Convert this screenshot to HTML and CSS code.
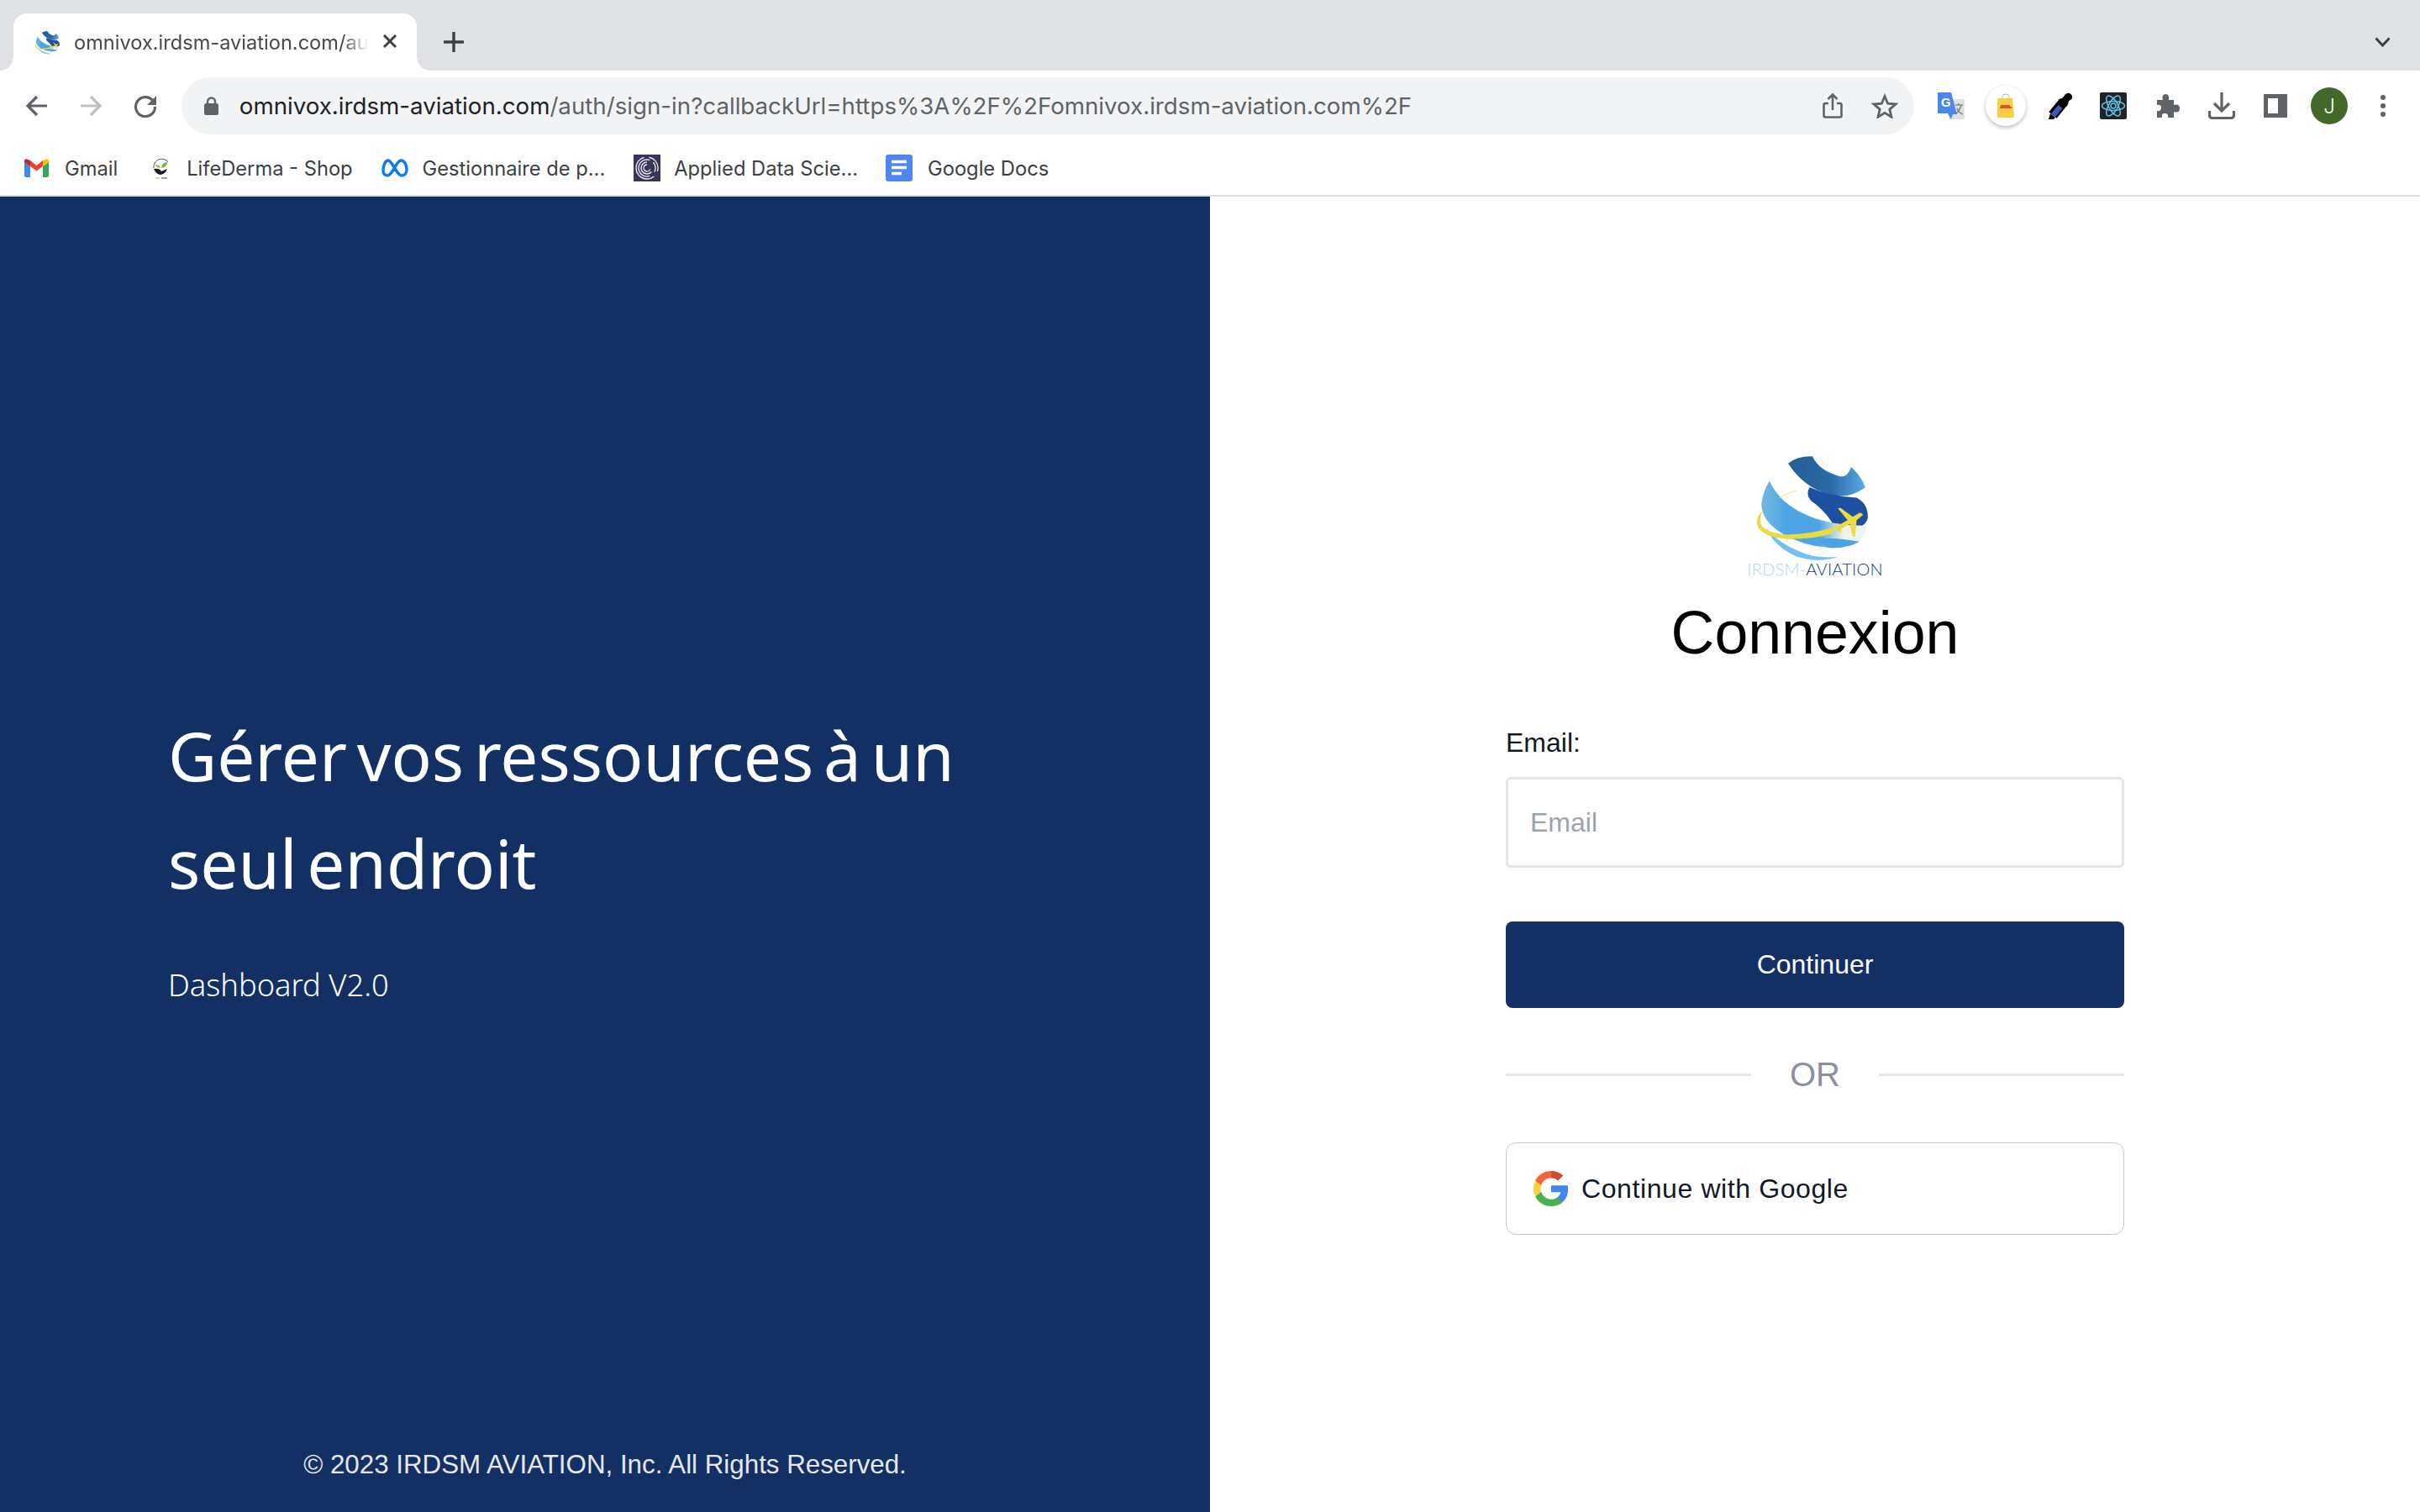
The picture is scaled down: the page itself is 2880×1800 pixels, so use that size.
FILE: index.html
```html
<!DOCTYPE html>
<html lang="fr">
  <head>
    <meta charset="utf-8" />
    <title>Connexion</title>
    <link rel="stylesheet" href="styles.css">
  </head>
  <body>
    <!-- shared drawings -->
    <svg class="defs" width="0" height="0">
      <defs>
        <linearGradient id="bandTop" x1="0" x2="1" y1="0" y2="0">
          <stop offset="0" stop-color="#255e95" />
          <stop offset="0.55" stop-color="#2a6aa5" />
          <stop offset="1" stop-color="#5cabe3" />
        </linearGradient>
        <linearGradient id="bandMid" x1="0" x2="1" y1="0" y2="0">
          <stop offset="0" stop-color="#74b8e2" />
          <stop offset="0.25" stop-color="#4ca3e5" />
          <stop offset="0.55" stop-color="#4ea5e6" />
          <stop offset="0.78" stop-color="#f4f3e2" />
          <stop offset="1" stop-color="#e8f2f4" />
        </linearGradient>
        <symbol id="globe" viewBox="415 60 420 385">
          <path d="M535 95Q570 68 622 70Q645 122 722 142Q748 145 760 108Q797 140 811 181Q750 226 680 206Q590 180 535 95Z" fill="url(#bandTop)" />
          <path d="M612 180Q680 212 780 218Q822 240 820 290Q815 315 790 322L700 322Q680 280 632 240Q592 215 612 180Z" fill="#1d50a0" />
          <path d="M468 158Q505 240 605 282Q690 318 816 318Q810 350 790 375Q745 402 680 397Q590 390 520 350Q440 305 439 240Q445 195 468 158Z" fill="url(#bandMid)" />
          <path d="M640 362Q720 362 790 375Q745 402 680 397Q650 385 640 362Z" fill="#4ba3e4" />
          <path d="M455 325Q500 385 600 420Q650 435 715 430Q640 452 570 430Q490 400 455 325Z" fill="#6fc0f5" />
          <path d="M565 192Q525 203 500 220" fill="none" stroke="#e7d84a" stroke-width="2" />
          <path d="M446 262Q418 285 424 315Q440 362 540 366Q630 366 697 345L694 325Q610 350 530 350Q450 345 436 310Q432 285 446 262Z" fill="#e8dc42" />
          <path d="M694 318L708 320L748 298L713 256L722 254L766 286L790 272Q802 272 802 280L780 298L774 358L766 358L756 312L724 330L726 342L716 340L708 332L696 328Z" fill="#e8dc42" />
        </symbol>
      </defs>
    </svg>

    <div class="tabstrip">
      <div class="tab">
        <svg class="tab-icon" width="31" height="31"><use href="#globe" /></svg>
        <span class="tab-title">omnivox.irdsm-aviation.com/au</span>
        <svg class="tab-close" width="18" height="18" viewBox="0 0 18 18">
          <path d="M2 2L16 16M16 2L2 16" stroke="#3c4043" stroke-width="3" fill="none" />
        </svg>
      </div>
      <svg class="new-tab" width="24" height="24" viewBox="0 0 24 24">
        <path d="M12 1V23M1 12H23" stroke="#3c4043" stroke-width="3.4" stroke-linecap="round" fill="none" />
      </svg>
      <svg class="tab-list" width="19" height="12" viewBox="0 0 19 12">
        <path d="M1.5 1.5L9.5 10L17.5 1.5" stroke="#3c4043" stroke-width="3" fill="none" />
      </svg>
    </div>

    <div class="toolbar">
      <div class="nav">
        <svg width="26" height="26" viewBox="0 0 26 26">
          <path d="M25 13H3M13 2L2 13L13 24" stroke="#5f6368" stroke-width="3.2" fill="none" />
        </svg>
        <svg width="26" height="26" viewBox="0 0 26 26">
          <path d="M1 13H23M13 2L24 13L13 24" stroke="#bdc1c6" stroke-width="3.2" fill="none" />
        </svg>
        <svg width="28" height="28" viewBox="0 0 28 28">
          <path d="M23 8A11.5 11.5 0 1 0 25.5 15" stroke="#5f6368" stroke-width="3.2" fill="none" />
          <path d="M27 2V13H16Z" fill="#5f6368" />
        </svg>
      </div>
      <div class="omnibox">
        <svg class="lock" width="17" height="22" viewBox="0 0 17 22">
          <path d="M4 9V6A4.500 4.500 0 0 1 13 6V9" stroke="#5f6368" stroke-width="2.400" fill="none" />
          <rect y="8" width="17" height="14" rx="2.500" fill="#5f6368" />
        </svg>
        <span class="url"><span class="url-host">omnivox.irdsm-aviation.com</span>/auth/sign-in?callbackUrl=https%3A%2F%2Fomnivox.irdsm-aviation.com%2F</span>
        <svg class="omni-share" width="24" height="30" viewBox="0 0 24 30">
          <path d="M7 12H3.500Q1.500 12 1.500 14V26.500Q1.500 28.500 3.500 28.500H20.500Q22.500 28.500 22.500 26.500V14Q22.500 12 20.500 12H17M12 20V2M6.500 7L12 1.500L17.500 7" stroke="#5f6368" stroke-width="2.600" fill="none" />
        </svg>
        <svg class="omni-star" width="32" height="30" viewBox="0 0 32 30">
          <path d="M16 3.500L19.600 12.200L29 13L21.800 19.100L24 28.300L16 23.400L8 28.300L10.200 19.100L3 13L12.400 12.200Z" stroke="#5f6368" stroke-width="2.800" fill="none" />
        </svg>
      </div>
      <div class="extensions">
        <svg class="ext-translate" width="32" height="32" viewBox="0 0 32 32">
          <rect x="13" y="8" width="19" height="24" rx="1" fill="#dfe1e1" />
          <path d="M21 15H30M25 13V15M28 15Q26 22 21 26M23 19Q25 24 30 26" stroke="#7d8c92" stroke-width="1.600" fill="none" />
          <path d="M1 0H16L23 26H18L16 32L12 25H1Q0 25 0 24V1Q0 0 1 0Z" fill="#4d86ea" />
          <text x="4" y="17" class="translate-g">G</text>
        </svg>
        <div class="ext-dhl">
          <svg width="20" height="30" viewBox="0 0 20 30">
            <path d="M6 8V4Q6 1 10 1Q14 1 14 4V8" stroke="#b8b8b0" stroke-width="1" fill="none" />
            <path d="M0 6H18L20 28L18 29H0Z" fill="#f8cf44" />
            <path d="M3 17H17M4 15H15" stroke="#d22d1f" stroke-width="1.400" />
          </svg>
        </div>
        <svg class="ext-dropper" width="30" height="32" viewBox="0 0 30 32">
          <path d="M19 11L6 27" stroke="#000" stroke-width="12" fill="none" />
          <path d="M1 32L3 25L9 30L7 32Z" fill="#000" />
          <path d="M14 8Q18 7 19 5Q22 0 26 1Q30 3 29 7Q28 9 25 10Q25 14 22 17Z" fill="#000" />
          <path d="M15 17L6.500 27" stroke="#3f55bf" stroke-width="6.500" fill="none" />
        </svg>
        <svg class="ext-react" width="32" height="32" viewBox="0 0 32 32">
          <rect width="32" height="32" rx="2" fill="#20232a" />
          <g fill="none" stroke="#61c3e8" stroke-width="1.500">
            <ellipse cx="16" cy="16" rx="13.500" ry="5.500" />
            <ellipse cx="16" cy="16" rx="13.500" ry="5.500" transform="rotate(60 16 16)" />
            <ellipse cx="16" cy="16" rx="13.500" ry="5.500" transform="rotate(120 16 16)" />
            <circle cx="16" cy="16" r="3" />
          </g>
        </svg>
        <svg class="ext-puzzle" width="30" height="30" viewBox="0 0 30 30">
          <path d="M2 8H9Q7 2 12 1Q17 1 16 8H22V14Q29 12 29 18Q29 24 22 22V29H15Q16 24 11 24Q7 24 8 29H2V21Q7 22 7 17Q7 13 2 14Z" fill="#5f6368" />
        </svg>
        <svg class="ext-download" width="32" height="32" viewBox="0 0 32 32">
          <path d="M16 0V20M7 13L16 22L25 13" stroke="#5f6368" stroke-width="3.200" fill="none" />
          <path d="M1.500 22V27Q1.500 30.500 5 30.500H27Q30.500 30.500 30.500 27V22" stroke="#5f6368" stroke-width="3.200" fill="none" />
        </svg>
        <div class="ext-panel"></div>
        <div class="avatar">J</div>
        <svg class="menu-dots" width="8" height="28" viewBox="0 0 8 28">
          <circle cx="4" cy="4" r="3" fill="#5f6368" />
          <circle cx="4" cy="14" r="3" fill="#5f6368" />
          <circle cx="4" cy="24" r="3" fill="#5f6368" />
        </svg>
      </div>
    </div>

    <div class="bookmarks">
      <a class="bookmark bm-gmail" href="#">
        <svg width="29" height="22" viewBox="0 0 29 22">
          <path d="M2 22H7V9L0 4V20Q0 22 2 22Z" fill="#4285f4" />
          <path d="M22 22H27Q29 22 29 20V4L22 9Z" fill="#34a853" />
          <path d="M22 2V9L29 4V3Q29 -1 25 1Z" fill="#fbbc04" />
          <path d="M7 9V2L14.500 8L22 2V9L14.500 14.500Z" fill="#ea4335" />
          <path d="M0 3V4L7 9V2L4 1Q0 -1 0 3Z" fill="#c5221f" />
        </svg>
        Gmail
      </a>
      <a class="bookmark bm-life" href="#">
        <svg width="23" height="28" viewBox="0 0 23 28">
          <path d="M3 14A9.500 9.500 0 0 1 20 7" stroke="#555" stroke-width="1" fill="none" />
          <path d="M12 14Q12 8 19 7Q19 13 12 14Z" fill="#7cb342" />
          <path d="M11 14Q10 10 5 10Q6 14 11 14Z" fill="#8bc34a" />
          <path d="M3 15Q10 14 12 18L19 15Q17 21 11 22Q6 22 3 15Z" fill="#1d1d1d" />
          <path d="M5 26H10" stroke="#8bc34a" stroke-width="1" />
          <path d="M12 26H19" stroke="#444" stroke-width="1" />
        </svg>
        LifeDerma - Shop
      </a>
      <a class="bookmark bm-meta" href="#">
        <svg width="32" height="22" viewBox="0 0 32 22">
          <path d="M2 14C2 7 5 2 8 2C13 2 18 20 24 20C28 20 30 17 30 13C30 7 27 2 23 2C18 2 13 20 7 20C4 20 2 18 2 14Z" stroke="#0a7cf0" stroke-width="3.400" fill="none" />
        </svg>
        Gestionnaire de p...
      </a>
      <a class="bookmark bm-applied" href="#">
        <svg width="32" height="32" viewBox="0 0 32 32">
          <rect width="32" height="32" fill="#38345a" />
          <g fill="none" stroke="#e4e4ee" stroke-width="1.400">
            <circle cx="16" cy="16" r="13" stroke-dasharray="46 6 22 8" transform="rotate(50 16 16)" />
            <circle cx="16" cy="16" r="10" stroke-dasharray="38 5 12 8" transform="rotate(70 16 16)" />
            <circle cx="16" cy="16" r="7" stroke-dasharray="28 16" transform="rotate(40 16 16)" />
            <circle cx="16" cy="16" r="4" stroke-dasharray="17 8" transform="rotate(20 16 16)" />
          </g>
        </svg>
        Applied Data Scie...
      </a>
      <a class="bookmark bm-docs" href="#">
        <svg width="32" height="32" viewBox="0 0 32 32">
          <rect width="32" height="32" rx="3" fill="#4f86f0" />
          <path d="M7 8.500H25M7 15.500H25M7 22.500H19" stroke="#fff" stroke-width="3.400" />
        </svg>
        Google Docs
      </a>
    </div>

    <div class="page">
      <section class="promo">
        <div class="promo-text">
          <h2 class="promo-title">Gérer vos ressources à un seul endroit</h2>
          <p class="promo-sub">Dashboard V2.0</p>
        </div>
        <p class="promo-footer">© 2023 IRDSM AVIATION, Inc. All Rights Reserved.</p>
      </section>

      <section class="signin">
        <div class="logo">
          <svg class="logo-globe" width="140" height="128"><use href="#globe" /></svg>
          <p class="logo-name"><span class="logo-light">IRDSM-</span>AVIATION</p>
        </div>
        <h1 class="signin-title">Connexion</h1>
        <form class="signin-form" action="#">
          <label class="field-label" for="email">Email:</label>
          <input class="field-input" id="email" type="text" placeholder="Email" />
          <button class="btn-primary" type="submit">Continuer</button>
          <div class="divider"><span>OR</span></div>
          <button class="btn-google" type="button">
            <svg width="42" height="42" viewBox="0 0 48 48">
              <path fill="#4285f4" d="M47 24.500c0-1.600-.1-3.200-.4-4.700H24v9h13c-.6 3-2.300 5.500-4.800 7.200v6h7.800C44.500 37.900 47 31.800 47 24.500z" />
              <path fill="#4caf50" d="M24 48c6.500 0 11.900-2.100 15.900-5.800l-7.700-6c-2.200 1.500-5 2.300-8.200 2.300-6.300 0-11.600-4.200-13.500-9.900h-8v6.200C6.500 42.700 14.600 48 24 48z" />
              <path fill="#fbd23c" d="M10.500 28.600c-.5-1.500-.8-3-.8-4.600s.3-3.100.8-4.600v-6.200h-8C.9 16.500 0 20.100 0 24s.9 7.500 2.500 10.800z" />
              <path fill="#f2643a" d="M24 9.500c3.500 0 6.700 1.200 9.200 3.600l6.900-6.900C35.900 2.400 30.500 0 24 0 14.600 0 6.500 5.300 2.500 13.200l8 6.200C12.400 13.700 17.700 9.500 24 9.500z" />
              <path fill="#c94f2e" d="M24 9.500c3.500 0 6.700 1.200 9.200 3.600l6.900-6.900C35.900 2.400 30.500 0 24 0z" />
            </svg>
            <span>Continue with Google</span>
          </button>
        </form>
      </section>
    </div>
  </body>
</html>
```

FILE: styles.css
```css
* {
  margin: 0;
  padding: 0;
  box-sizing: border-box;
}
body {
  /* whole window */
  display: flex;
  flex-direction: column;
  width: 2880px;
  height: 1800px;
  overflow: hidden;
  background: #fff;
  font-family: "Liberation Sans", Arial, sans-serif;
}
a {
  text-decoration: none;
  color: inherit;
}
svg {
  display: block;
  flex: none;
}
.defs {
  position: absolute;
}

/* tab strip */
.tabstrip {
  display: flex;
  align-items: center;
  height: 84px;
  padding: 16px 35px 0 16px;
  background: #dfe1e5;
  font-family: Inter, "Liberation Sans", sans-serif;
}
.tab {
  position: relative;
  display: flex;
  align-items: center;
  width: 480px;
  height: 68px;
  padding: 0 23px 0 25px;
  background: #fff;
  border-radius: 16px 16px 0 0;
}
.tab::before,
.tab::after {
  /* little curves at the foot of the tab */
  content: "";
  position: absolute;
  bottom: 0;
  width: 16px;
  height: 16px;
}
.tab::before {
  left: -16px;
  background: radial-gradient(circle at 0 0, transparent 15.500px, #fff 16px);
}
.tab::after {
  right: -16px;
  background: radial-gradient(circle at 100% 0, transparent 15.500px, #fff 16px);
}
.tab-title {
  flex: 1;
  margin-left: 16px;
  white-space: nowrap;
  font-size: 23.600px;
  color: #45484d;
  -webkit-mask-image: linear-gradient(to right, #000 91%, transparent 100%);
  mask-image: linear-gradient(to right, #000 91%, transparent 100%);
}
.tab-close {
  margin-left: 16px;
  margin-top: -2px;
}
.new-tab {
  margin-left: 32px;
}
.tab-list {
  margin-left: auto;
}

/* back/forward, address bar, extensions */
.toolbar {
  display: flex;
  align-items: center;
  height: 84px;
  padding: 0 40px 0 31px;
  font-family: Inter, "Liberation Sans", sans-serif;
}
.nav {
  display: flex;
  align-items: center;
  gap: 38px;
  width: 185px;
}
.omnibox {
  display: flex;
  align-items: center;
  width: 2064px;
  height: 68px;
  padding: 0 19px 0 27px;
  border-radius: 34px;
  background: #f1f3f4;
}
.url {
  flex: 1;
  margin-left: 25px;
  white-space: nowrap;
  font-size: 27.700px;
  color: #5f6368;
}
.url-host {
  color: #202124;
}
.omni-star {
  margin-left: 34px;
}
.extensions {
  display: flex;
  align-items: center;
  flex: 1;
  padding-left: 28px;
}
.translate-g {
  font-size: 15px;
  font-weight: 700;
  fill: #fff;
  font-family: "Liberation Sans", sans-serif;
}
.ext-dhl {
  display: flex;
  align-items: center;
  justify-content: center;
  width: 48px;
  height: 48px;
  margin-left: 25px;
  border-radius: 50%;
  background: #fff;
  box-shadow: 0 2px 5px rgba(0, 0, 0, 0.28);
}
.ext-dropper {
  margin-left: 26px;
}
.ext-react {
  margin-left: 32px;
}
.ext-puzzle {
  margin-left: 34px;
}
.ext-download {
  margin-left: 33px;
}
.ext-panel {
  width: 28px;
  height: 28px;
  margin-left: 34px;
  border: 5px solid #5f6368;
  border-right-width: 11px;
  background: #fff;
}
.avatar {
  display: flex;
  align-items: center;
  justify-content: center;
  width: 44px;
  height: 44px;
  margin-left: 28px;
  border-radius: 50%;
  background: #44682a;
  color: #fff;
  font-size: 24px;
  font-weight: 300;
}
.menu-dots {
  margin-left: 38px;
}

/* bookmarks bar */
.bookmarks {
  display: flex;
  align-items: center;
  height: 66px;
  padding: 0 0 0 29px;
  border-bottom: 2px solid #dadce0;
  font-family: Inter, "Liberation Sans", sans-serif;
  font-size: 23.700px;
  color: #3c4043;
}
.bookmark {
  display: flex;
  align-items: center;
  gap: 19px;
  white-space: nowrap;
}
.bm-life {
  margin-left: 40px;
}
.bm-meta {
  gap: 17px;
  margin-left: 34px;
}
.bm-applied {
  gap: 16px;
  margin-left: 34px;
}
.bm-docs {
  gap: 18px;
  margin-left: 33px;
}

/* main split */
.page {
  display: grid;
  grid-template-columns: 1440px 1440px;
  flex: 1;
}
.promo {
  display: grid;
  grid-template-rows: 1fr auto 1fr;
  padding: 0 200px;
  background: #123064;
  color: #fff;
}
.promo-text {
  grid-row: 2;
}
.promo-title {
  font-family: "Noto Sans", sans-serif;
  font-size: 80px;
  font-weight: 400;
  line-height: 128px;
  word-spacing: -9px;
}
.promo-sub {
  margin-top: 53px;
  font-family: "Noto Sans", sans-serif;
  font-size: 36.300px;
  font-weight: 300;
  line-height: 56px;
}
.promo-footer {
  grid-row: 3;
  align-self: end;
  margin: 0 -100px 36px;
  text-align: center;
  font-size: 31.300px;
  line-height: 40px;
  color: #e5e7eb;
}

/* sign in column */
.signin {
  display: flex;
  flex-direction: column;
  align-items: center;
  padding-top: 306px;
}
.logo {
  display: flex;
  flex-direction: column;
  align-items: center;
}
.logo-globe {
  margin-right: 4px;
}
.logo-name {
  margin-top: 2px;
  font-family: Lato, "Liberation Sans", sans-serif;
  font-size: 20px;
  font-weight: 300;
  line-height: 15px;
  letter-spacing: 0.200px;
  color: #123c78;
  white-space: nowrap;
}
.logo-light {
  color: #a9d8f0;
}
.signin-title {
  margin-top: 28px;
  font-size: 71.700px;
  font-weight: 400;
  line-height: 80px;
  color: #000;
}
.signin-form {
  display: flex;
  flex-direction: column;
  width: 736px;
  margin-top: 71px;
}
.field-label {
  font-size: 32px;
  line-height: 40px;
  color: #111827;
}
.field-input {
  height: 108px;
  margin-top: 21px;
  padding: 0 26px;
  border: 3px solid #e5e5e5;
  border-radius: 6px;
  font-family: inherit;
  font-size: 32px;
  outline: none;
}
.field-input::placeholder {
  color: #9ca3af;
  opacity: 1;
}
.btn-primary {
  height: 103px;
  margin-top: 64px;
  border: 0;
  border-radius: 8px;
  background: #123064;
  color: #fff;
  font-family: inherit;
  font-size: 32px;
}
.divider {
  display: flex;
  align-items: center;
  gap: 46px;
  margin-top: 54px;
  font-size: 40px;
  line-height: 50px;
  color: #8b909a;
}
.divider::before,
.divider::after {
  content: "";
  flex: 1;
  height: 3px;
  background: #e5e7eb;
}
.btn-google {
  display: flex;
  align-items: center;
  gap: 15px;
  height: 110px;
  margin-top: 56px;
  padding: 0 32px;
  border: 1px solid #c8c8c8;
  border-radius: 12px;
  background: #fff;
  color: #111827;
  font-family: inherit;
  font-size: 32px;
  letter-spacing: 0.600px;
}
```
